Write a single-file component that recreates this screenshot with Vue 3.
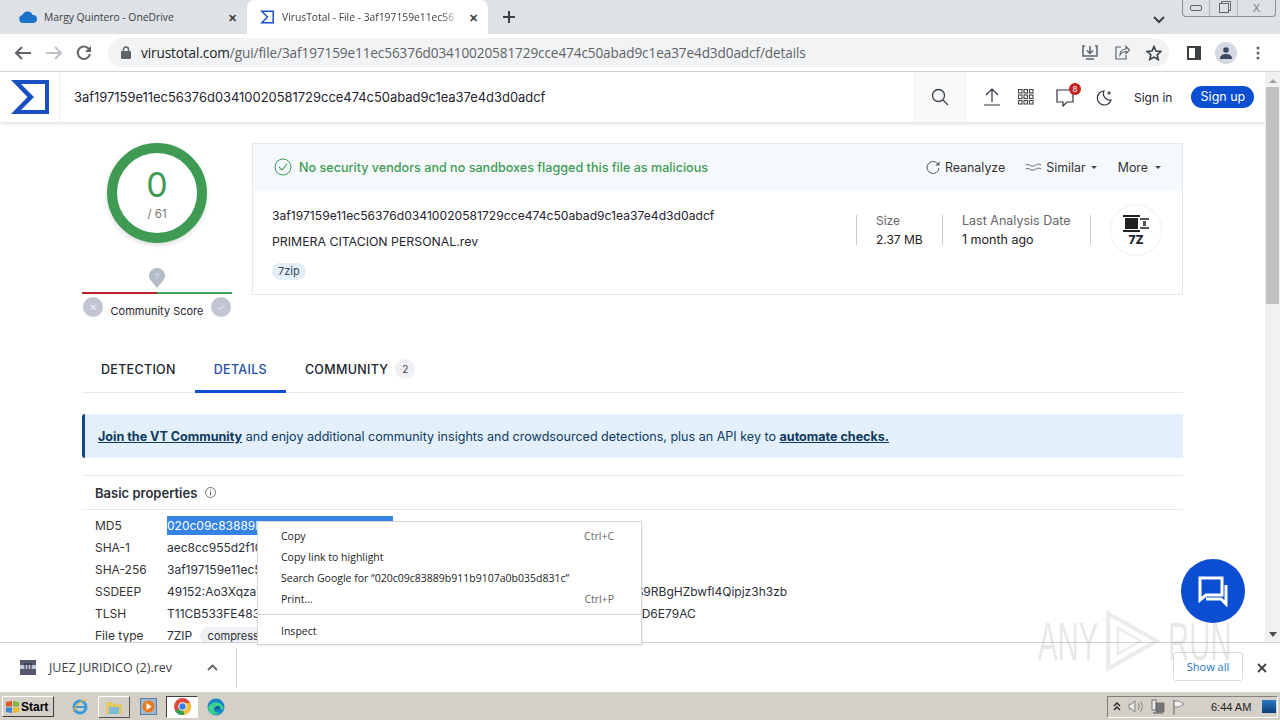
<script setup>
const hash = '3af197159e11ec56376d03410020581729cce474c50abad9c1ea37e4d3d0adcf'
const props = [
  { k: 'MD5', v: '020c09c83889b911b9107a0b035d831c', sel: true },
  { k: 'SHA-1', v: 'aec8cc955d2f10c1e8ed7d5a6b3f1c0a9e4472bd' },
  { k: 'SHA-256', v: hash },
  { k: 'SSDEEP', v: '49152:Ao3Xqza7Tn1LkV0sYwEeGm2HdPu5cRxUo8NfJt6BiQvK4aLm2Xc7DpWe5:yS9RBgHZbwfl4Qipjz3h3zb' },
  { k: 'TLSH', v: 'T11CB533FE4831A2C7D90E55B6F07C4418AE3D2B96C1F0E72D4A85C9330F6BA2D6E79AC' },
]
const menu = [
  { t: 'Copy', s: 'Ctrl+C' },
  { t: 'Copy link to highlight' },
  { t: 'Search Google for “020c09c83889b911b9107a0b035d831c”' },
  { t: 'Print...', s: 'Ctrl+P' },
]
</script>

<template>
  <div class="screen">
    <div class="tabstrip">
      <div class="tab">
        <svg width="18" height="12" viewBox="0 0 18 12"><path d="M4 12a4 4 0 0 1-.6-7.900A5.500 5.500 0 0 1 13.600 4 4 4 0 0 1 14.500 12z" fill="#1a73c8"/></svg>
        <span class="tabtitle">Margy Quintero - OneDrive</span>
        <span class="tabx">✕</span>
      </div>
      <div class="tab active">
        <svg width="16" height="16" viewBox="0 0 32 32"><path d="M2 3h28v26H2l13-13z M9 6l10 10-10 10h18V6z" fill="#1a4fc4" fill-rule="evenodd"/></svg>
        <span class="tabtitle fade">VirusTotal - File - 3af197159e11ec56</span>
        <span class="tabx">✕</span>
      </div>
      <svg class="plus" width="14" height="14" viewBox="0 0 14 14"><path d="M7 1v12M1 7h12" stroke="#3c4043" stroke-width="2"/></svg>
      <div class="grow"></div>
      <svg class="chev" width="12" height="8" viewBox="0 0 12 8"><path d="M1 1l5 5 5-5" fill="none" stroke="#3c4043" stroke-width="2"/></svg>
      <div class="winbtns">
        <span class="wb"><i class="wmin"></i></span>
        <span class="wb"><i class="wmax"></i></span>
        <span class="wb wclose">X</span>
      </div>
    </div>

    <div class="toolbar">
      <svg width="18" height="16" viewBox="0 0 18 16"><path d="M17 8H3M8 2L2 8l6 6" fill="none" stroke="#5f6368" stroke-width="2"/></svg>
      <svg width="18" height="16" viewBox="0 0 18 16"><path d="M1 8h14M10 2l6 6-6 6" fill="none" stroke="#bdc1c6" stroke-width="2"/></svg>
      <svg width="16" height="16" viewBox="0 0 16 16"><path d="M13.500 5A6.200 6.200 0 1 0 14 9" fill="none" stroke="#5f6368" stroke-width="2"/><path d="M15 1v6H9z" fill="#5f6368"/></svg>
      <div class="omnibox">
        <svg width="10" height="13" viewBox="0 0 10 13"><rect y="5" width="10" height="8" rx="1" fill="#5f6368"/><path d="M2.500 6V3.500a2.500 2.500 0 0 1 5 0V6" fill="none" stroke="#5f6368" stroke-width="1.500"/></svg>
        <span class="url"><b>virustotal.com</b>/gui/file/{{ hash }}/details</span>
        <div class="grow"></div>
        <svg width="16" height="16" viewBox="0 0 16 16"><path d="M3 1H1v10h14V1h-2M8 1v7M5 5.500L8 8.500l3-3M4 14h8" fill="none" stroke="#5f6368" stroke-width="1.500"/></svg>
        <svg width="16" height="16" viewBox="0 0 16 16"><path d="M7 2H2v12h10v-4M6 10c0-4 3-6 6-6V1.500L15.500 5 12 8.500V6.500c-2.500 0-4.500 1-6 3.500z" fill="none" stroke="#5f6368" stroke-width="1.200"/></svg>
        <svg width="16" height="16" viewBox="0 0 16 16"><path d="M8 1.500l2 4.500 4.800.5-3.600 3.200 1 4.800L8 12.100l-4.200 2.400 1-4.800L1.200 6.500 6 6z" fill="none" stroke="#3c4043" stroke-width="1.600"/></svg>
      </div>
      <svg class="side" width="14" height="14" viewBox="0 0 14 14"><rect x="1" y="1" width="12" height="12" fill="none" stroke="#3c4043" stroke-width="2"/><rect x="8" y="1" width="5" height="12" fill="#3c4043"/></svg>
      <span class="avatar"><svg width="12" height="12" viewBox="0 0 12 12"><circle cx="6" cy="3" r="2.800" fill="#3c4a63"/><path d="M0 12c0-4 3-5 6-5s6 1 6 5z" fill="#3c4a63"/></svg></span>
      <svg width="4" height="14" viewBox="0 0 4 14"><circle cx="2" cy="2" r="1.500" fill="#5f6368"/><circle cx="2" cy="7" r="1.500" fill="#5f6368"/><circle cx="2" cy="12" r="1.500" fill="#5f6368"/></svg>
    </div>

    <div class="viewport">
      <div class="page">
        <header class="vthead">
          <div class="logo">
            <svg width="38" height="34" viewBox="0 0 38 34"><path d="M0 0h38v34H0l16.500-17z M10 4l13 13-13 13h24V4z" fill="#1a4fc4" fill-rule="evenodd"/></svg>
          </div>
          <div class="search">{{ hash }}</div>
          <div class="searchbtn">
            <svg width="18" height="18" viewBox="0 0 18 18"><circle cx="7.500" cy="7.500" r="6" fill="none" stroke="#3c4043" stroke-width="1.300"/><path d="M12 12l5 5" stroke="#3c4043" stroke-width="1.300"/></svg>
          </div>
          <div class="headtools">
            <svg width="16" height="18" viewBox="0 0 16 18"><path d="M8 14V1M2 7l6-6 6 6M0 17h16" fill="none" stroke="#2f3440" stroke-width="1.200"/></svg>
            <svg width="16" height="16" viewBox="0 0 16 16" class="grid"><g fill="none" stroke="#444" stroke-width="1.100"><rect x=".5" y=".5" width="3.500" height="3.500"/><rect x="6" y=".5" width="3.500" height="3.500"/><rect x="11.500" y=".5" width="3.500" height="3.500"/><rect x=".5" y="6" width="3.500" height="3.500"/><rect x="6" y="6" width="3.500" height="3.500"/><rect x="11.500" y="6" width="3.500" height="3.500"/><rect x=".5" y="11.500" width="3.500" height="3.500"/><rect x="6" y="11.500" width="3.500" height="3.500"/><rect x="11.500" y="11.500" width="3.500" height="3.500"/></g></svg>
            <span class="bell">
              <svg width="18" height="19" viewBox="0 0 18 19"><path d="M1 2h16v12h-6l-4 4v-4H1z" fill="none" stroke="#2f3440" stroke-width="1.200"/></svg>
              <em class="badge">8</em>
            </span>
            <svg class="moon" width="17" height="17" viewBox="0 0 17 17"><path d="M8 2a7 7 0 1 0 7 9A6.500 6.500 0 0 1 8 2z" fill="none" stroke="#2f3440" stroke-width="1.200"/><path d="M13 2v4M11 4h4" stroke="#2f3440" stroke-width="1"/></svg>
            <span class="signin">Sign in</span>
            <span class="signup">Sign up</span>
          </div>
        </header>

        <main class="content">
          <section class="summary">
            <div class="scorecol">
              <div class="ring">
                <div class="ringnum">0</div>
                <div class="ringof">/ 61</div>
              </div>
              <svg class="pin" width="16" height="20" viewBox="0 0 16 20"><path d="M8 20C3 14 0 11 0 8a8 8 0 0 1 16 0c0 3-3 6-8 12z" fill="#b4bac8"/><text x="8" y="11" font-size="9" fill="#e6e8ee" text-anchor="middle" font-family="Liberation Sans">?</text></svg>
              <div class="scorebar"><i></i><i></i></div>
              <div class="scorerow">
                <span class="vote">✕</span>
                <span class="cslabel">Community Score</span>
                <span class="vote">✓</span>
              </div>
            </div>

            <div class="card">
              <div class="cardtop">
                <svg width="18" height="18" viewBox="0 0 18 18"><circle cx="9" cy="9" r="8" fill="none" stroke="#3c9f58" stroke-width="1"/><path d="M5 9l3 3 5-6" fill="none" stroke="#3c9f58" stroke-width="1.100"/></svg>
                <span class="verdict">No security vendors and no sandboxes flagged this file as malicious</span>
                <div class="grow"></div>
                <span class="action reanalyze">
                  <svg width="14" height="14" viewBox="0 0 14 14"><path d="M11.500 3.500A6 6 0 1 0 13 8" fill="none" stroke="#555" stroke-width="1"/><path d="M13.500 1.500v4h-4z" fill="#555"/></svg>
                  Reanalyze
                </span>
                <span class="action similar">
                  <svg width="15" height="8" viewBox="0 0 15 8"><path d="M0 2c3-2 4 2 7.500 1S12 0 15 2M0 6c3-2 4 2 7.500 1S12 4 15 6" fill="none" stroke="#555" stroke-width=".9"/></svg>
                  Similar <i class="caret"></i>
                </span>
                <span class="action more">More <i class="caret"></i></span>
              </div>
              <div class="cardbody">
                <div class="names">
                  <div class="cardhash">{{ hash }}</div>
                  <div class="fname">PRIMERA CITACION PERSONAL.rev</div>
                  <span class="tag">7zip</span>
                </div>
                <div class="stat size">
                  <div class="statk">Size</div>
                  <div class="statv">2.37 MB</div>
                </div>
                <div class="stat date">
                  <div class="statk">Last Analysis Date</div>
                  <div class="statv">1 month ago</div>
                </div>
                <div class="filetype">
                  <svg width="28" height="17" viewBox="0 0 28 17"><path d="M1 0h17v2H1zM1 15h17v2H1z" fill="#222"/><rect x="3" y="3" width="13" height="11" fill="#222"/><path d="M18 3h9v2h-9zM18 12h9v2h-9zM21 6h3v5h-3z" fill="#555"/></svg>
                  <span class="sevenz">7Z</span>
                </div>
              </div>
            </div>
          </section>

          <nav class="tabs">
            <span class="vt">DETECTION</span>
            <span class="vt on">DETAILS</span>
            <span class="vt">COMMUNITY <em class="count">2</em></span>
          </nav>

          <div class="join">
            <a>Join the VT Community</a>&nbsp;and enjoy additional community insights and crowdsourced detections, plus an API key to&nbsp;<a>automate checks.</a>
          </div>

          <section class="basic">
            <h3 class="basictitle">Basic properties
              <svg width="11" height="11" viewBox="0 0 11 11"><circle cx="5.500" cy="5.500" r="5" fill="none" stroke="#555" stroke-width=".8"/><path d="M5.500 4.500v4M5.500 2.500v1" stroke="#555" stroke-width=".9"/></svg>
            </h3>
            <div class="rows">
              <div v-for="p in props" :key="p.k" class="row">
                <span class="rk">{{ p.k }}</span>
                <span class="rv" :class="{ sel: p.sel }">{{ p.v }}</span>
              </div>
              <div class="row">
                <span class="rk">File type</span>
                <span class="rv">7ZIP <em class="chip">compressed</em></span>
              </div>
            </div>
          </section>
        </main>
      </div>

      <div class="scrollbar">
        <i class="up"></i>
        <div class="thumb"></div>
        <div class="grow"></div>
        <i class="down"></i>
      </div>

      <div class="fab">
        <svg width="32" height="32" viewBox="0 0 32 32"><path d="M3 3h22v17H9l-6 5z" fill="none" stroke="#fff" stroke-width="3"/><path d="M29 10v19l-5-5H9" fill="none" stroke="#fff" stroke-width="3"/></svg>
      </div>

      <div class="ctxmenu">
        <div v-for="m in menu" :key="m.t" class="mi">
          <span>{{ m.t }}</span><span class="ms">{{ m.s }}</span>
        </div>
        <div class="msep"></div>
        <div class="mi">Inspect</div>
      </div>
    </div>

    <div class="downloads">
      <div class="dlitem">
        <svg width="16" height="15" viewBox="0 0 16 15"><rect width="16" height="15" fill="#56586e"/><rect y="5" width="16" height="4" fill="#c5c8d8"/><path d="M5 3v6M8 3v6M11 3v6" stroke="#22243a" stroke-width="1"/></svg>
        <span class="dlname">JUEZ JURIDICO (2).rev</span>
        <svg class="dlchev" width="11" height="7" viewBox="0 0 11 7"><path d="M1 6l4.500-4.500L10 6" fill="none" stroke="#5f6368" stroke-width="1.800"/></svg>
      </div>
      <div class="grow"></div>
      <span class="showall">Show all</span>
      <svg class="dlx" width="10" height="10" viewBox="0 0 10 10"><path d="M1 1l8 8M9 1l-8 8" stroke="#3c4043" stroke-width="1.800"/></svg>
    </div>

    <div class="taskbar">
      <div class="start">
        <svg width="15" height="14" viewBox="0 0 15 14"><path d="M1 2l6-1v5.500H1z" fill="#e2562e"/><path d="M8 1l6 1v4.500H8z" fill="#7db642"/><path d="M1 7.500h6V13l-6-1z" fill="#3b87d8"/><path d="M8 7.500h6V12l-6 1z" fill="#f0bd2d"/></svg>
        <b>Start</b>
      </div>
      <div class="quick">
        <span class="ql">
          <svg width="18" height="18" viewBox="0 0 18 18"><circle cx="9" cy="9" r="6" fill="none" stroke="#3b9ad9" stroke-width="3"/><path d="M4 9h10" stroke="#3b9ad9" stroke-width="2"/><path d="M2 14C5 6 12 1 16 2" fill="none" stroke="#e8b93a" stroke-width="1.200"/></svg>
        </span>
        <span class="ql raised">
          <svg width="18" height="16" viewBox="0 0 18 16"><path d="M1 3h6l2 2h8v10H1z" fill="#e3c766"/><rect x="4" y="8" width="10" height="7" fill="#7cbcd9"/></svg>
        </span>
        <span class="ql">
          <svg width="17" height="17" viewBox="0 0 17 17"><rect x=".5" y=".5" width="16" height="16" fill="#9fb6cf" stroke="#5d7ea3"/><circle cx="8.500" cy="8.500" r="6" fill="#e87a1d"/><path d="M6.500 5l5 3.500-5 3.500z" fill="#fff"/></svg>
        </span>
        <span class="ql pressed">
          <svg width="17" height="17" viewBox="0 0 17 17"><circle cx="8.500" cy="8.500" r="8.500" fill="#dd4b3e"/><path d="M8.500 8.500L1.200 13a8.500 8.500 0 0 0 9 3.900z" fill="#2f9e4f"/><path d="M8.500 5h7.500a8.500 8.500 0 0 1-5.800 11.900z" fill="#f6c332"/><circle cx="8.500" cy="8.500" r="4.200" fill="#fff"/><circle cx="8.500" cy="8.500" r="3.200" fill="#3a7de8"/></svg>
        </span>
        <span class="ql">
          <svg width="18" height="18" viewBox="0 0 18 18"><circle cx="9" cy="9" r="8.500" fill="#1587c9"/><path d="M1 11C2 5 8 3 12 5c3 1.500 5 4 4.500 6.500H7c0 2.500 3 4 6 3-3 3.500-10.500 3-12-3.500z" fill="#3fcf8e"/><path d="M7 11.500c0-3 3-4 5-3.500 1 .3 1.500 1.500 1.500 3.500z" fill="#0f5ea8"/></svg>
        </span>
      </div>
      <div class="grow"></div>
      <div class="tray">
        <svg width="8" height="9" viewBox="0 0 8 9"><path d="M1 4l3-3 3 3M1 8l3-3 3 3" fill="none" stroke="#222" stroke-width="1.300"/></svg>
        <svg width="16" height="17" viewBox="0 0 14 14"><path d="M1 5h2l3-3v10L3 9H1z" fill="#eee" stroke="#777" stroke-width=".8"/><path d="M9 4c1 2 1 4 0 6M11 2.500c2 3 2 6 0 9" fill="none" stroke="#777" stroke-width=".8"/></svg>
        <svg width="14" height="16" viewBox="0 0 14 16"><rect x="1" y="1" width="4" height="10" fill="#eee" stroke="#555" stroke-width=".8"/><rect x="5" y="4" width="8" height="9" fill="#777" stroke="#555" stroke-width=".6"/><path d="M2 14h10" stroke="#555"/></svg>
        <svg width="14" height="16" viewBox="0 0 14 16"><path d="M2 1v15" stroke="#666"/><path d="M2 2h5l5 3-5 3H2z" fill="#eee" stroke="#777" stroke-width=".8"/></svg>
        <span class="clock">6:44 AM</span>
        <span class="desk"></span>
      </div>
    </div>

    <div class="watermark">
      <span class="wmany">ANY</span>
      <svg width="55" height="62" viewBox="0 0 68 76"><path d="M4 4v68l60-34z" fill="none" stroke="#888" stroke-width="5"/><path d="M16 22v32l28-16z" fill="none" stroke="#888" stroke-width="3"/></svg>
      <span class="wmrun">RUN</span>
    </div>
  </div>
</template>

<style scoped>
.screen {
  position: relative;
  width: 1280px;
  height: 720px;
  display: flex;
  flex-direction: column;
  overflow: hidden;
  background: #fff;
  color: #1f2430;
  font-family: Inter, "Liberation Sans", sans-serif;
  font-size: 12px;
}

.grow { flex: 1; }

.tabstrip {
  height: 34px;
  flex: none;
  display: flex;
  align-items: flex-end;
  background: #dee1e6;
  font-family: "Open Sans", "Liberation Sans", sans-serif;
  font-size: 10.300px;
  color: #3c4043;
  padding-left: 8px;
}
.tab {
  width: 237px;
  height: 34px;
  display: flex;
  align-items: center;
  gap: 7px;
  padding: 0 8px 0 11px;
  box-sizing: border-box;
}
.tab.active {
  width: 241px;
  margin-left: 2px;
  background: #fff;
  border-radius: 8px 8px 0 0;
  padding: 0 10px 0 12px;
}
.tabtitle { flex: 1; white-space: nowrap; overflow: hidden; }
.fade {
  -webkit-mask-image: linear-gradient(to right, #000 88%, transparent);
  mask-image: linear-gradient(to right, #000 88%, transparent);
}
.tabx { font-size: 11px; font-weight: 700; color: #3c4043; }
.plus { margin: 0 0 10px 14px; }
.chev { margin: 0 17px 10px 0; }
.winbtns {
  align-self: flex-start;
  display: flex;
  height: 16px;
  width: 92px;
  margin-right: 4px;
  border: 1px solid #8b8f96;
  border-top: none;
  border-radius: 0 0 4px 4px;
  background: #dde0e5;
}
.wb { flex: 1; display: flex; align-items: center; justify-content: center; border-right: 1px solid #b5b8bd; color: #7b7f86; font-size: 11px; font-family: "Liberation Sans", sans-serif; }
.wb:last-child { border-right: none; flex: 1.400; }
.wmin { width: 10px; height: 4px; border: 1px solid #666; border-radius: 2px; }
.wmax { width: 8px; height: 8px; border: 1px solid #666; box-shadow: 2px -2px 0 -1px #dde0e5, 2px -2px 0 0 #666; }

.toolbar {
  height: 38px;
  flex: none;
  box-sizing: border-box;
  display: flex;
  align-items: center;
  gap: 13px;
  padding: 0 20px 0 14px;
  border-bottom: 1px solid #d0d2d6;
  background: #fff;
}
.omnibox {
  flex: 1;
  height: 29px;
  margin-left: 3px;
  padding: 0 7px 0 13px;
  display: flex;
  align-items: center;
  gap: 16px;
  background: #f1f3f4;
  border-radius: 15px;
}
.url {
  font-family: "Open Sans", "Liberation Sans", sans-serif;
  font-size: 13.580px;
  color: #5f6368;
  margin-left: -6px;
  letter-spacing: -0.1px;
}
.url b { font-weight: 400; color: #202124; }
.side { margin-left: 5px; }
.avatar {
  width: 22px;
  height: 22px;
  margin: 0 6px 0 1px;
  border-radius: 50%;
  background: #d5d9e1;
  display: flex;
  align-items: center;
  justify-content: center;
}

.viewport {
  position: relative;
  flex: 1;
  min-height: 0;
  display: flex;
}
.page { flex: 1; min-width: 0; overflow: hidden; }

.vthead {
  height: 50px;
  display: flex;
  align-items: stretch;
  background: #fff;
  box-shadow: 0 2px 4px rgba(0, 0, 0, 0.12);
}
.logo {
  width: 60px;
  box-sizing: border-box;
  display: flex;
  align-items: center;
  padding-left: 11px;
  border-right: 1px solid #eceef2;
}
.search {
  flex: 1;
  display: flex;
  align-items: center;
  padding-left: 14px;
  font-size: 12.930px;
  white-space: nowrap;
}
.searchbtn {
  width: 50px;
  display: flex;
  align-items: center;
  justify-content: center;
  background: #f8f9fb;
  border-left: 1px solid #eceef2;
  border-right: 1px solid #eceef2;
}
.headtools {
  width: 299px;
  box-sizing: border-box;
  display: flex;
  align-items: center;
  padding-left: 18px;
  gap: 18px;
}
.bell { position: relative; display: flex; margin-left: 4px; }
.moon { margin-left: 4px; }
.badge {
  position: absolute;
  top: -5px;
  right: -7px;
  width: 12px;
  height: 12px;
  border-radius: 50%;
  background: #c5221f;
  color: #fff;
  font-style: normal;
  font-size: 8px;
  line-height: 12px;
  text-align: center;
}
.signin { margin-left: 3px; white-space: nowrap; }
.signup {
  margin-left: 1px;
  width: 63px;
  height: 22px;
  border-radius: 11px;
  background: #0b4ed1;
  color: #fff;
  font-size: 12.500px;
  line-height: 22px;
  text-align: center;
  white-space: nowrap;
}

.content { padding: 21px 82px 0 82px; }

.summary { display: flex; align-items: flex-start; }
.scorecol {
  width: 150px;
  flex: none;
  display: flex;
  flex-direction: column;
  align-items: center;
  margin-right: 20px;
}
.ring {
  width: 100px;
  height: 100px;
  box-sizing: border-box;
  border: 10px solid #3f9b54;
  border-radius: 50%;
  box-shadow: 0 2px 5px rgba(0, 0, 0, 0.15);
  display: flex;
  flex-direction: column;
  align-items: center;
  justify-content: center;
  color: #3f9b54;
}
.ringnum { font-size: 34px; line-height: 38px; }
.ringof { font-size: 11.500px; color: #777; line-height: 14px; margin-top: 3px; }
.pin { margin-top: 25px; }
.scorebar { display: flex; width: 150px; height: 2px; margin-top: 4px; }
.scorebar i { flex: 1; background: #3fa159; }
.scorebar i:first-child { background: #bb2029; }
.scorerow {
  width: 150px;
  display: flex;
  align-items: center;
  justify-content: space-between;
  margin-top: 2px;
  padding: 0 1px;
  box-sizing: border-box;
}
.vote {
  width: 20px;
  height: 20px;
  border-radius: 50%;
  background: #c1c5d2;
  color: #eceef3;
  font-size: 10px;
  line-height: 20px;
  text-align: center;
}
.cslabel { font-size: 11px; margin-top: 8px; white-space: nowrap; }

.card {
  flex: 1;
  height: 152px;
  border: 1px solid #e6e8ec;
  box-sizing: border-box;
}
.cardtop {
  height: 46px;
  display: flex;
  align-items: center;
  padding: 0 21px 0 21px;
  background: #f5f9fc;
}
.verdict {
  margin-left: 7px;
  color: #3f9b54;
  font-size: 12.600px;
  font-weight: 500;
  white-space: nowrap;
}
.action {
  display: flex;
  align-items: center;
  gap: 5px;
  color: #333;
  font-size: 12.400px;
  white-space: nowrap;
}
.more { gap: 7px; }
.reanalyze { margin-right: 21px; }
.similar { margin-right: 21px; }
.caret {
  width: 0;
  height: 0;
  border: 3px solid transparent;
  border-top: 3px solid #444;
  margin-top: 3px;
}
.cardbody {
  display: flex;
  padding: 18px 20px 0 19px;
}
.names { flex: 1; }
.cardhash { font-size: 12.130px; line-height: 16px; white-space: nowrap; }
.fname { font-size: 12.300px; line-height: 16px; margin-top: 10px; white-space: nowrap; }
.tag {
  display: inline-block;
  margin-top: 13px;
  padding: 0 6px;
  height: 17px;
  line-height: 17px;
  font-size: 11px;
  border-radius: 9px;
  background: #e3eef9;
  color: #33465f;
}
.stat {
  height: 30px;
  margin-top: 7px;
  border-left: 1px solid #c8cbd0;
  padding-left: 19px;
  line-height: 19px;
  font-size: 12px;
}
.size { width: 66px; }
.date { width: 128px; font-size: 12.500px; border-right: 1px solid #c8cbd0; margin-right: 19px; white-space: nowrap; }
.statk { color: #666; margin-top: -4px; }
.statv { color: #222; }
.filetype {
  width: 52px;
  height: 52px;
  margin-top: -4px;
  box-sizing: border-box;
  border: 1px solid #eceef2;
  border-radius: 50%;
  display: flex;
  flex-direction: column;
  align-items: center;
  justify-content: center;
  gap: 2px;
}
.sevenz { font-size: 12px; font-weight: 800; line-height: 11px; }

.tabs {
  height: 46px;
  margin-top: 28px;
  display: flex;
  align-items: stretch;
  border-bottom: 1px solid #e8e9ec;
  font-size: 12.500px;
  font-weight: 500;
  letter-spacing: 0.3px;
}
.vt {
  padding: 0 19px;
  display: flex;
  align-items: center;
  color: #20242c;
  white-space: nowrap;
}
.vt.on {
  color: #1f4fa8;
  border-bottom: 3px solid #0b4ed1;
  padding-top: 3px;
  margin-bottom: -1px;
}
.count {
  width: 20px;
  height: 20px;
  margin-left: 7px;
  border-radius: 50%;
  background: #eef0f3;
  font-style: normal;
  font-weight: 400;
  font-size: 10px;
  line-height: 20px;
  text-align: center;
  color: #444;
}

.join {
  height: 44px;
  margin-top: 21px;
  padding-left: 13px;
  display: flex;
  align-items: center;
  background: #e3f0fb;
  border-left: 3px solid #0d4a7e;
  border-radius: 3px 0 0 3px;
  color: #0d3a5e;
  font-size: 12.550px;
  white-space: nowrap;
}
.join a { font-weight: 700; text-decoration: underline; color: #0d3a5e; }

.basic { margin-top: 17px; border-top: 1px solid #e8e9ec; }
.basictitle {
  height: 33px;
  margin: 0;
  padding-left: 13px;
  display: flex;
  align-items: center;
  gap: 8px;
  font-size: 13px;
  font-weight: 600;
  color: #2b2f38;
  border-bottom: 1px solid #e8e9ec;
}
.rows { padding: 4px 0 0 13px; }
.row {
  height: 22px;
  display: flex;
  align-items: center;
  font-size: 12px;
  white-space: nowrap;
}
.rk { width: 72px; flex: none; color: #333; }
.rv { color: #2b2f38; }
.rv.sel { background: #3584e4; color: #fff; padding: 2px 2px 2px 0; }
.chip {
  margin-left: 4px;
  padding: 2px 8px;
  border-radius: 9px;
  background: #eef0f4;
  font-style: normal;
  font-size: 11px;
}

.scrollbar {
  width: 15px;
  flex: none;
  display: flex;
  flex-direction: column;
  align-items: center;
  background: #f1f1f1;
}
.thumb { width: 13px; height: 217px; background: #c1c1c1; margin-top: 4px; }
.up, .down { width: 0; height: 0; border: 4px solid transparent; }
.up { border-bottom: 4px solid #a3a3a3; margin-top: 3px; }
.down { border-top: 5px solid #505050; margin-bottom: 1px; }

.fab {
  position: absolute;
  right: 35px;
  top: 487px;
  width: 64px;
  height: 64px;
  border-radius: 50%;
  background: #0b4ed1;
  display: flex;
  align-items: center;
  justify-content: center;
}

.ctxmenu {
  position: absolute;
  left: 257px;
  top: 449px;
  width: 385px;
  height: 124px;
  box-sizing: border-box;
  padding-top: 3px;
  background: #fff;
  border: 1px solid #d5d6d8;
  box-shadow: 1px 1px 2px rgba(0, 0, 0, 0.08);
  font-family: "Open Sans", "Liberation Sans", sans-serif;
  font-size: 10.500px;
  color: #222;
}
.mi {
  height: 21px;
  display: flex;
  align-items: center;
  justify-content: space-between;
  padding: 0 27px 0 23px;
}
.ms { color: #666; }
.msep { height: 1px; background: #d5d6d8; margin: 5px 0 5px; }

.downloads {
  height: 51px;
  flex: none;
  box-sizing: border-box;
  display: flex;
  align-items: center;
  background: #fff;
  border-top: 1px solid #d0d2d6;
  border-bottom: 1px solid #cfcfcf;
  font-family: "Open Sans", "Liberation Sans", sans-serif;
  font-size: 12.500px;
}
.dlitem {
  width: 237px;
  height: 40px;
  box-sizing: border-box;
  display: flex;
  align-items: center;
  padding-left: 20px;
  border-right: 1px solid #d0d2d6;
}
.dlname { margin-left: 13px; flex: 1; color: #3c4043; white-space: nowrap; }
.dlchev { margin-right: 18px; }
.showall {
  width: 70px;
  height: 29px;
  margin-top: -2px;
  line-height: 27px;
  box-sizing: border-box;
  text-align: center;
  border: 1px solid #dadce0;
  border-radius: 3px;
  color: #1a73c8;
  font-size: 11px;
}
.dlx { margin: 0 13px 0 14px; }

.taskbar {
  height: 27px;
  flex: none;
  display: flex;
  align-items: center;
  background: #d4d0c8;
  font-family: "Liberation Sans", sans-serif;
}
.start {
  width: 52px;
  height: 21px;
  margin-left: 2px;
  box-sizing: border-box;
  display: flex;
  align-items: center;
  gap: 1px;
  padding-left: 2px;
  background: #d4d0c8;
  border: 1px solid;
  border-color: #fff #404040 #404040 #fff;
  font-size: 12px;
  color: #000;
}
.quick { display: flex; align-items: center; margin-left: 10px; gap: 2px; }
.ql { width: 32px; height: 22px; display: flex; align-items: center; justify-content: center; box-sizing: border-box; }
.raised { border: 1px solid; border-color: #fff #555 #555 #fff; }
.pressed { background: #fff; border: 1px solid; border-color: #404040 #fff #fff #404040; }
.tray {
  width: 171px;
  height: 22px;
  margin-right: 2px;
  box-sizing: border-box;
  display: flex;
  align-items: center;
  gap: 7px;
  padding-left: 5px;
  border: 1px solid;
  border-color: #808080 #fff #fff #808080;
  font-size: 11px;
  color: #222;
}
.clock { margin-left: 18px; white-space: nowrap; }
.desk {
  width: 14px;
  height: 13px;
  margin-left: 4px;
  background: linear-gradient(#2b78c5, #0d3f7a);
}

.watermark {
  position: absolute;
  left: 1038px;
  top: 610px;
  display: flex;
  align-items: center;
  gap: 0;
  opacity: 0.16;
  pointer-events: none;
  font-family: "Liberation Sans", sans-serif;
  font-size: 53px;
  color: #777;
}
.watermark span { display: inline-block; transform: scaleX(0.555); transform-origin: left center; }
.wmany { margin-right: -42px; }
.wmrun { margin-left: 8px; margin-right: -51px; }
</style>

<style>
html, body { margin: 0; overflow: hidden; }
</style>
